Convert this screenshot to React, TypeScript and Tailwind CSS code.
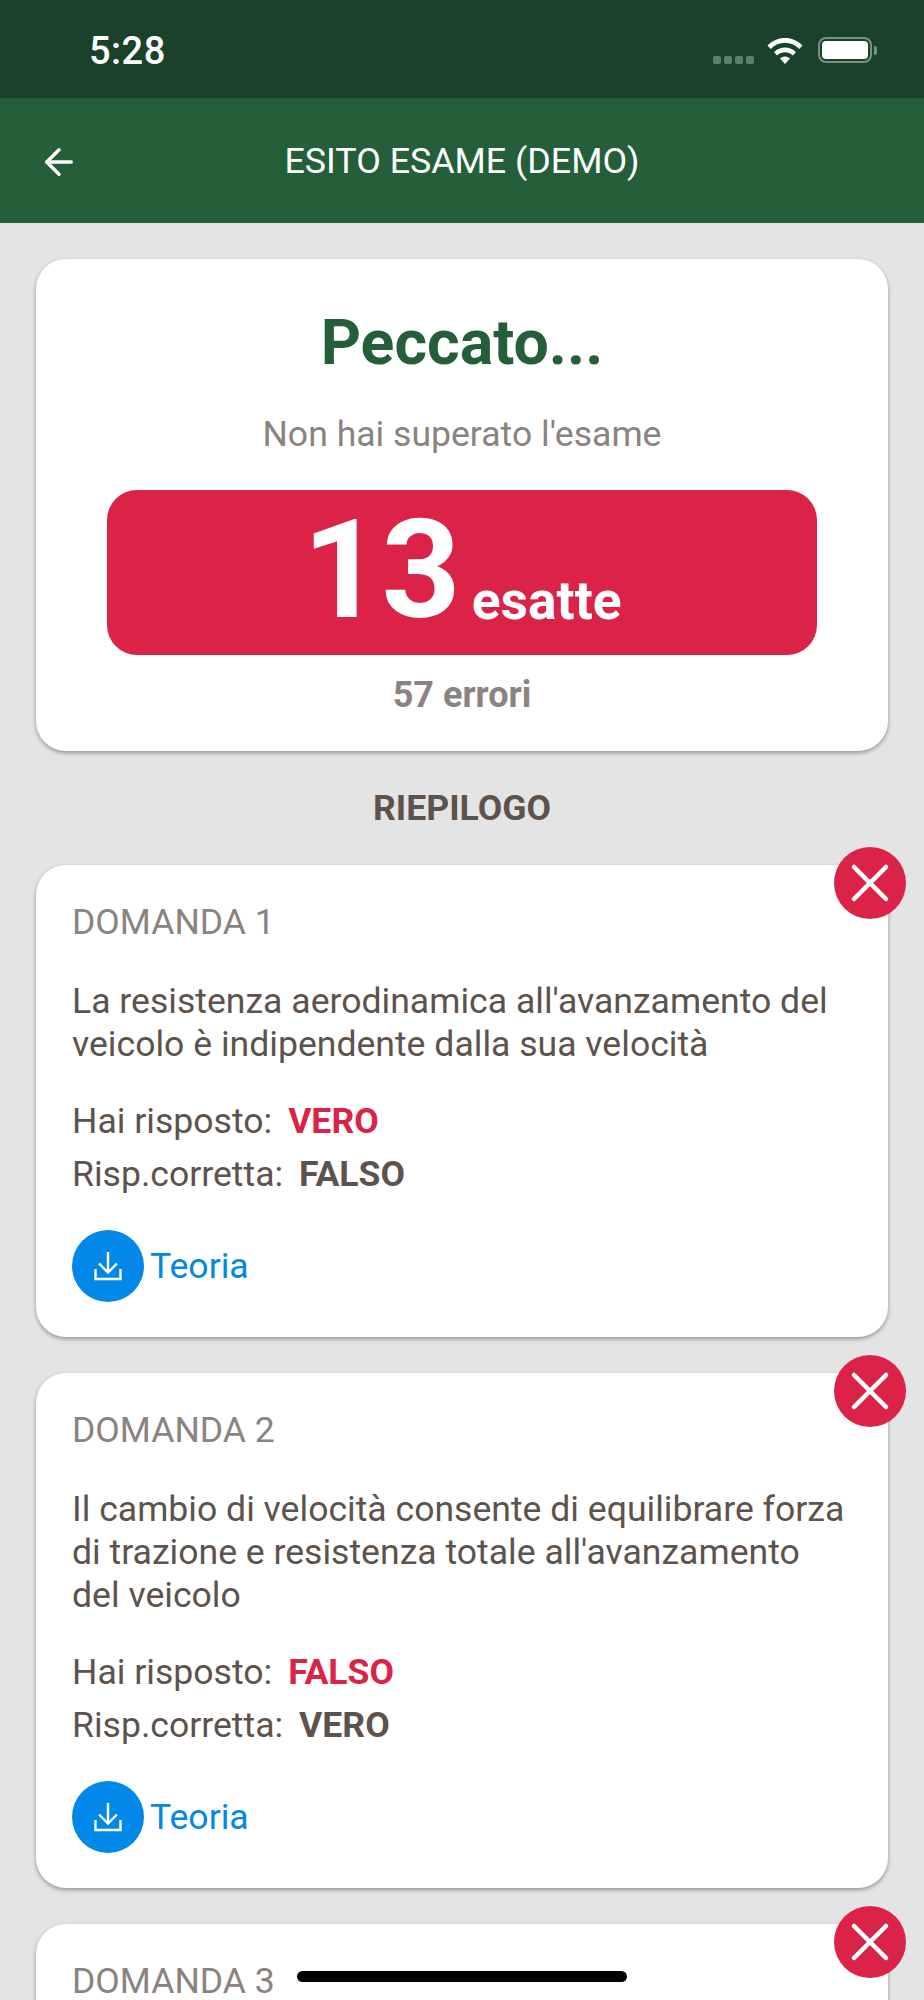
import { ArrowLeft, X } from 'lucide-react';

type Question = {
  id: number;
  text?: string;
  given?: string;
  correct?: string;
};

const questions: Question[] = [
  {
    id: 1,
    text: "La resistenza aerodinamica all'avanzamento del veicolo è indipendente dalla sua velocità",
    given: 'VERO',
    correct: 'FALSO',
  },
  {
    id: 2,
    text: "Il cambio di velocità consente di equilibrare forza di trazione e resistenza totale all'avanzamento del veicolo",
    given: 'FALSO',
    correct: 'VERO',
  },
  // only the heading of the third card is on screen
  { id: 3 },
];

function StatusBar() {
  return (
    <div className="h-[98px] bg-[#1a4129] flex items-start justify-between pl-[89px] pr-[52px] shrink-0">
      <span className="mt-[30px] text-[38px] leading-[42px] font-medium tracking-[0.5px] text-white">5:28</span>
      <div className="flex items-start mt-[37px]">
        <div className="flex gap-[3px] mt-[19px] mr-[13px]">
          <span className="w-[8px] h-[8px] rounded-[2px] bg-[#5c7f69]" />
          <span className="w-[8px] h-[8px] rounded-[2px] bg-[#5c7f69]" />
          <span className="w-[8px] h-[8px] rounded-[2px] bg-[#5c7f69]" />
          <span className="w-[8px] h-[8px] rounded-[2px] bg-[#5c7f69]" />
        </div>
        <svg width="36" height="27" viewBox="0 0 36 27" className="mr-[15px]">
          <path d="M0.5 8.5C10 -1.5 26 -1.5 35.5 8.5L32.3 12C24.5 3.8 11.5 3.8 3.7 12Z" fill="#fff" />
          <path d="M7 15.2C13 9 23 9 29 15.2L25.8 18.6C21.5 14.2 14.5 14.2 10.2 18.6Z" fill="#fff" />
          <path d="M13 21.5C15.8 18.8 20.2 18.8 23 21.5L18 27Z" fill="#fff" />
        </svg>
        <div className="relative w-[54px] h-[26px] rounded-[8px] border-2 border-[#76937f] p-[2px]">
          <div className="w-full h-full rounded-[4px] bg-white" />
          <span className="absolute right-[-7px] top-[7px] w-[3px] h-[9px] rounded-r-[2px] bg-[#76937f]" />
        </div>
      </div>
    </div>
  );
}

function Header() {
  return (
    <div className="relative h-[125px] bg-[#245f39] flex items-center justify-center shrink-0">
      <ArrowLeft className="absolute left-[38px] top-[43px] w-[42px] h-[42px] text-white" strokeWidth={2} />
      <h1 className="text-[35.8px] leading-[40px] font-normal text-white">ESITO ESAME (DEMO)</h1>
    </div>
  );
}

function ResultCard() {
  return (
    <div className="bg-white rounded-[30px] shadow-[0_2px_4px_rgba(0,0,0,0.35)] flex flex-col items-center pt-[48px] pb-[36px] px-[71px]">
      <h2 className="text-[62.6px] leading-[72px] font-bold text-[#245f39]">Peccato...</h2>
      <p className="mt-[35px] text-[35.6px] leading-[40px] text-[#8b8380]">Non hai superato l'esame</p>
      <div className="mt-[36px] w-full h-[165px] rounded-[30px] bg-[#db2348] flex items-end justify-center pb-[10px] text-white font-bold">
        <span className="text-[138px] leading-[150px]">13</span>
        <span className="ml-[11px] mb-[17px] text-[53.4px] leading-[54px]">esatte</span>
      </div>
      <p className="mt-[20px] text-[36px] leading-[40px] font-bold text-[#8b8380]">57 errori</p>
    </div>
  );
}

function QuestionCard({ question }: { question: Question }) {
  return (
    <div className="relative bg-white rounded-[30px] shadow-[0_2px_4px_rgba(0,0,0,0.35)] px-[36px] pt-[37px] pb-[35px]">
      <div className="absolute right-[-18px] top-[-18px] w-[72px] h-[72px] rounded-full bg-[#db2348] flex items-center justify-center">
        <X className="w-[64px] h-[64px] shrink-0 text-white" strokeWidth={1.7} />
      </div>
      <p className="text-[35.6px] leading-[40px] text-[#8b8380]">DOMANDA {question.id}</p>
      {question.text && (
        <>
          <p className="mt-[38px] text-[35.6px] leading-[43px] text-[#5d534c]">{question.text}</p>
          <p className="mt-[35px] text-[35.6px] leading-[40px] text-[#5d534c]">
            Hai risposto:
            <span className="ml-[16px] font-bold text-[#db2348]">{question.given}</span>
          </p>
          <p className="mt-[13px] text-[35.6px] leading-[40px] text-[#5d534c]">
            Risp.corretta:
            <span className="ml-[16px] font-bold">{question.correct}</span>
          </p>
          <div className="mt-[36px] flex items-center gap-[6px]">
            <div className="w-[72px] h-[72px] rounded-full bg-[#0288e8] flex items-center justify-center">
              <svg width="28" height="30" viewBox="0 0 28 30" fill="none" stroke="#fff" strokeWidth="2.4">
                <path d="M14 1V21M5 12.5L14 21.5L23 12.5" />
                <path d="M1.5 18V28H26.5V18" />
              </svg>
            </div>
            <span className="text-[35.6px] leading-[40px] text-[#0288e8]">Teoria</span>
          </div>
        </>
      )}
    </div>
  );
}

export default function App() {
  return (
    <div className="relative h-[2000px] overflow-hidden bg-[#e4e4e4] flex flex-col font-['Roboto',sans-serif]">
      <StatusBar />
      <Header />
      <div className="px-[36px] pt-[36px] flex flex-col">
        <ResultCard />
        <h3 className="mt-[37px] mb-[37px] text-center text-[35.6px] leading-[40px] font-bold text-[#5d534c]">RIEPILOGO</h3>
        <div className="flex flex-col gap-[36px]">
          {questions.map(q => (
            <QuestionCard key={q.id} question={q} />
          ))}
        </div>
      </div>
      <div className="absolute left-[297px] top-[1971px] w-[330px] h-[11px] rounded-full bg-black" />
    </div>
  );
}
